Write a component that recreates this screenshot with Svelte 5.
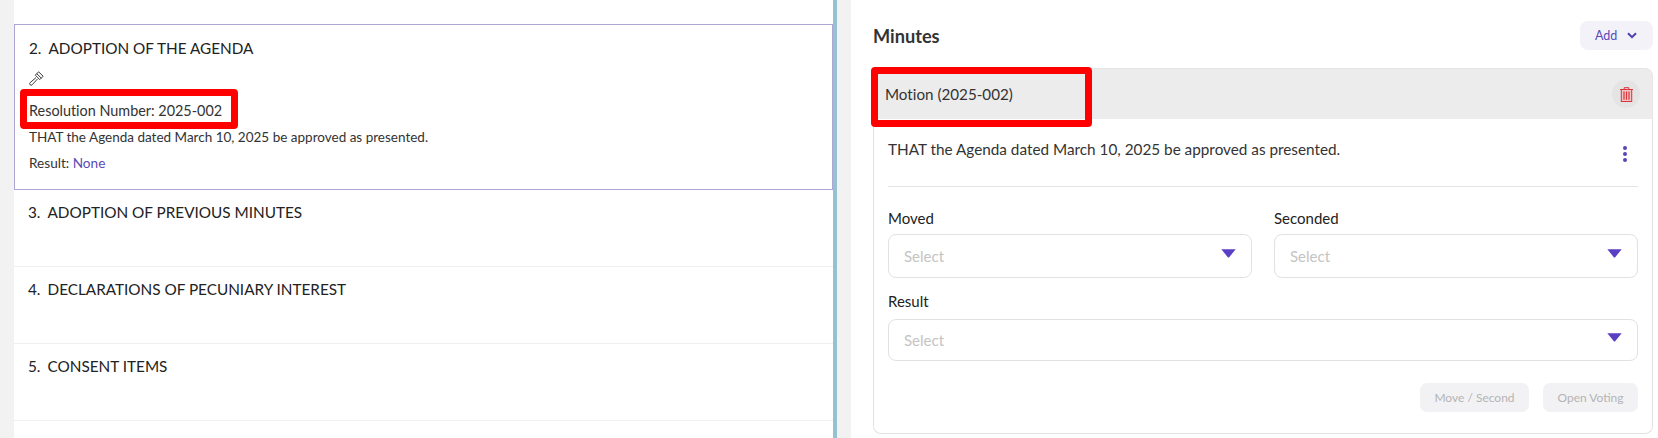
<script>
  const items = [
    { n: '3.', t: 'ADOPTION OF PREVIOUS MINUTES' },
    { n: '4.', t: 'DECLARATIONS OF PECUNIARY INTEREST' },
    { n: '5.', t: 'CONSENT ITEMS' }
  ];
</script>

{#snippet caret()}
  <svg class="caret" width="15" height="9" viewBox="0 0 15 9" aria-hidden="true">
    <path d="M0.3 0.3H14.7L8.2 8.2Q7.5 8.9 6.8 8.2Z" fill="#5a3fc4" />
  </svg>
{/snippet}

<div class="page">
  <div class="gutter"></div>
  <section class="agenda">
    <article class="card">
      <h3 class="title"><span class="num">2.</span>ADOPTION OF THE AGENDA</h3>
      <svg class="gavel" width="15" height="15" viewBox="0 0 15 15" fill="none" stroke="#3c3c3c" stroke-width="1" aria-hidden="true">
        <path d="M6.3 4.2 9.6 0.8 14.2 5.2 10.8 8.6Z" stroke-linejoin="round" />
        <path d="M7.8 2.7 12.3 7.1" />
        <path d="M7 6.6 1.1 11.7a1.4 1.4 0 0 0 2 2.1L8.6 7.9" stroke-linejoin="round" />
      </svg>
      <p class="res">Resolution Number: 2025-002</p>
      <p class="desc">THAT the Agenda dated March 10, 2025 be approved as presented.</p>
      <p class="result">Result: <a href="#none">None</a></p>
    </article>
    {#each items as item}
      <article class="row">
        <h3 class="title"><span class="num">{item.n}</span>{item.t}</h3>
      </article>
    {/each}
  </section>
  <div class="bar"></div>
  <div class="spacer"></div>
  <section class="minutes">
    <header class="head">
      <h2>Minutes</h2>
      <button class="add">Add
        <svg width="10" height="7" viewBox="0 0 10 7" fill="none" stroke="#4f3fb0" stroke-width="2" aria-hidden="true">
          <path d="M1 1.2 5 5.2 9 1.2" />
        </svg>
      </button>
    </header>
    <div class="motion">
      <div class="motion-head">
        <span>Motion (2025-002)</span>
        <button class="trash" aria-label="Delete">
          <svg width="13" height="15" viewBox="0 0 13 15" fill="none" stroke="#d8343a" stroke-width="1" aria-hidden="true">
            <path d="M0 2.5H13M4.2 2.5V0.7H8.8V2.5" />
            <rect x="1.3" y="2.5" width="10.4" height="12" fill="#f4c4c4" />
            <path d="M4 4.5V12.8M6.5 4.5V12.8M9 4.5V12.8" stroke-width="1.2" />
          </svg>
        </button>
      </div>
      <div class="motion-body">
        <div class="motion-text">
          <p>THAT the Agenda dated March 10, 2025 be approved as presented.</p>
          <span class="dots" aria-hidden="true"><i></i><i></i><i></i></span>
        </div>
        <div class="fields">
          <div class="field">
            <span class="label">Moved</span>
            <div class="select tall"><span>Select</span>{@render caret()}</div>
          </div>
          <div class="field">
            <span class="label">Seconded</span>
            <div class="select tall"><span>Select</span>{@render caret()}</div>
          </div>
          <div class="field wide">
            <span class="label">Result</span>
            <div class="select"><span>Select</span>{@render caret()}</div>
          </div>
        </div>
        <div class="actions">
          <button class="move">Move / Second</button>
          <button class="vote">Open Voting</button>
        </div>
      </div>
    </div>
  </section>
  <div class="mark mark-a"></div>
  <div class="mark mark-b"></div>
</div>

<style>
  :global(body) { margin: 0; background: #fff; }
  .page {
    position: relative;
    display: flex;
    width: 1658px;
    height: 438px;
    overflow: hidden;
    font-family: Lato, "Liberation Sans", sans-serif;
    font-variant-ligatures: none;
    color: #222;
    background: #fff;
  }
  .gutter { width: 14px; flex: none; background: #f2f2f2; }
  .agenda { width: 819px; flex: none; padding-top: 24px; box-sizing: border-box; }
  .bar { width: 4px; flex: none; background: #95c2d0; }
  .spacer { width: 14px; flex: none; background: #f2f2f2; }
  .card {
    height: 166px;
    box-sizing: border-box;
    border: 1px solid #aaa7d3;
    padding: 13px 14px 0;
  }
  .row {
    height: 77px;
    box-sizing: border-box;
    padding: 12px 14px 0 14px;
    border-bottom: 1px solid #f0f0f0;
  }
  .title {
    margin: 0;
    font-size: 15.3px;
    line-height: 20px;
    font-weight: 400;
    color: #222;
  }
  .num { display: inline-block; width: 19.5px; }
  .gavel { display: block; margin-top: 13px; }
  .res, .desc, .result { margin: 0; line-height: 20px; color: #333; }
  .res { margin-top: 15px; font-size: 14.4px; }
  .desc { margin-top: 6px; font-size: 13.5px; }
  .result { margin-top: 6px; font-size: 13.6px; }
  .result a { color: #5a4bb8; text-decoration: none; }
  .minutes { flex: 1; padding: 21px 5px 0 22px; min-width: 0; }
  .head { display: flex; justify-content: space-between; align-items: center; height: 29px; padding-left: 1px; margin-left: -1px; }
  h2 { margin: 0; font-size: 18.2px; font-weight: 700; color: #333; }
  button { font-family: inherit; border: 0; padding: 0; }
  .add {
    display: flex;
    align-items: center;
    gap: 10px;
    width: 73px;
    height: 29px;
    padding-left: 15px;
    box-sizing: border-box;
    border-radius: 8px;
    background: #f2f2f8;
    color: #5a4bb8;
    font-size: 12.5px;
  }
  .motion { margin-top: 18px; }
  .motion-head {
    height: 51px;
    box-sizing: border-box;
    display: flex;
    align-items: center;
    justify-content: space-between;
    padding: 0 12px 0 11px;
    background: #ececec;
    border: 1px solid #e6e6e6;
    border-bottom: 0;
    border-radius: 8px 8px 0 0;
    font-size: 15.2px;
    color: #333;
  }
  .trash {
    width: 28px;
    height: 28px;
    border-radius: 50%;
    background: #e4e4e4;
    display: grid;
    place-items: center;
  }
  .trash svg { display: block; }
  .motion-body {
    height: 315px;
    box-sizing: border-box;
    border: 1px solid #e2e2e2;
    border-top: 0;
    border-radius: 0 0 8px 8px;
    padding: 0 14px;
  }
  .motion-text {
    height: 68px;
    box-sizing: border-box;
    padding-top: 20px;
    display: flex;
    justify-content: space-between;
    border-bottom: 1px solid #e4e4e4;
    font-size: 15.3px;
    color: #333;
  }
  .motion-text p { margin: 0; line-height: 20px; }
  .dots { display: flex; flex-direction: column; gap: 2px; margin: 7px 11px 0 0; }
  .dots i { width: 4px; height: 4px; border-radius: 50%; background: #5a45b8; }
  .fields {
    display: grid;
    grid-template-columns: 364px 364px;
    column-gap: 22px;
    padding-top: 21px;
  }
  .field { display: flex; flex-direction: column; }
  .wide { grid-column: 1 / -1; margin-top: 13px; }
  .label { font-size: 15px; line-height: 20px; color: #222; margin-bottom: 6px; }
  .wide .label { margin-bottom: 8px; }
  .select {
    height: 42px;
    box-sizing: border-box;
    border: 1px solid #e2e2e2;
    border-radius: 8px;
    padding: 0 15px;
    display: flex;
    align-items: center;
    justify-content: space-between;
    font-size: 15px;
    color: #c4c4c4;
  }
  .tall { height: 44px; }
  .caret { display: block; margin-top: -6px; }
  .actions { display: flex; justify-content: flex-end; gap: 14px; margin-top: 22px; }
  .actions button {
    height: 29px;
    border-radius: 7px;
    background: #f2f2f4;
    color: #b4b4b4;
    font-size: 12px;
  }
  .move { width: 109px; }
  .vote { width: 95px; }
  .mark {
    position: absolute;
    box-sizing: border-box;
    border: 7px solid #f00;
    border-radius: 4px;
  }
  .mark-a { left: 20px; top: 89px; width: 218px; height: 40px; }
  .mark-b { left: 871px; top: 67px; width: 221px; height: 60px; }
</style>
